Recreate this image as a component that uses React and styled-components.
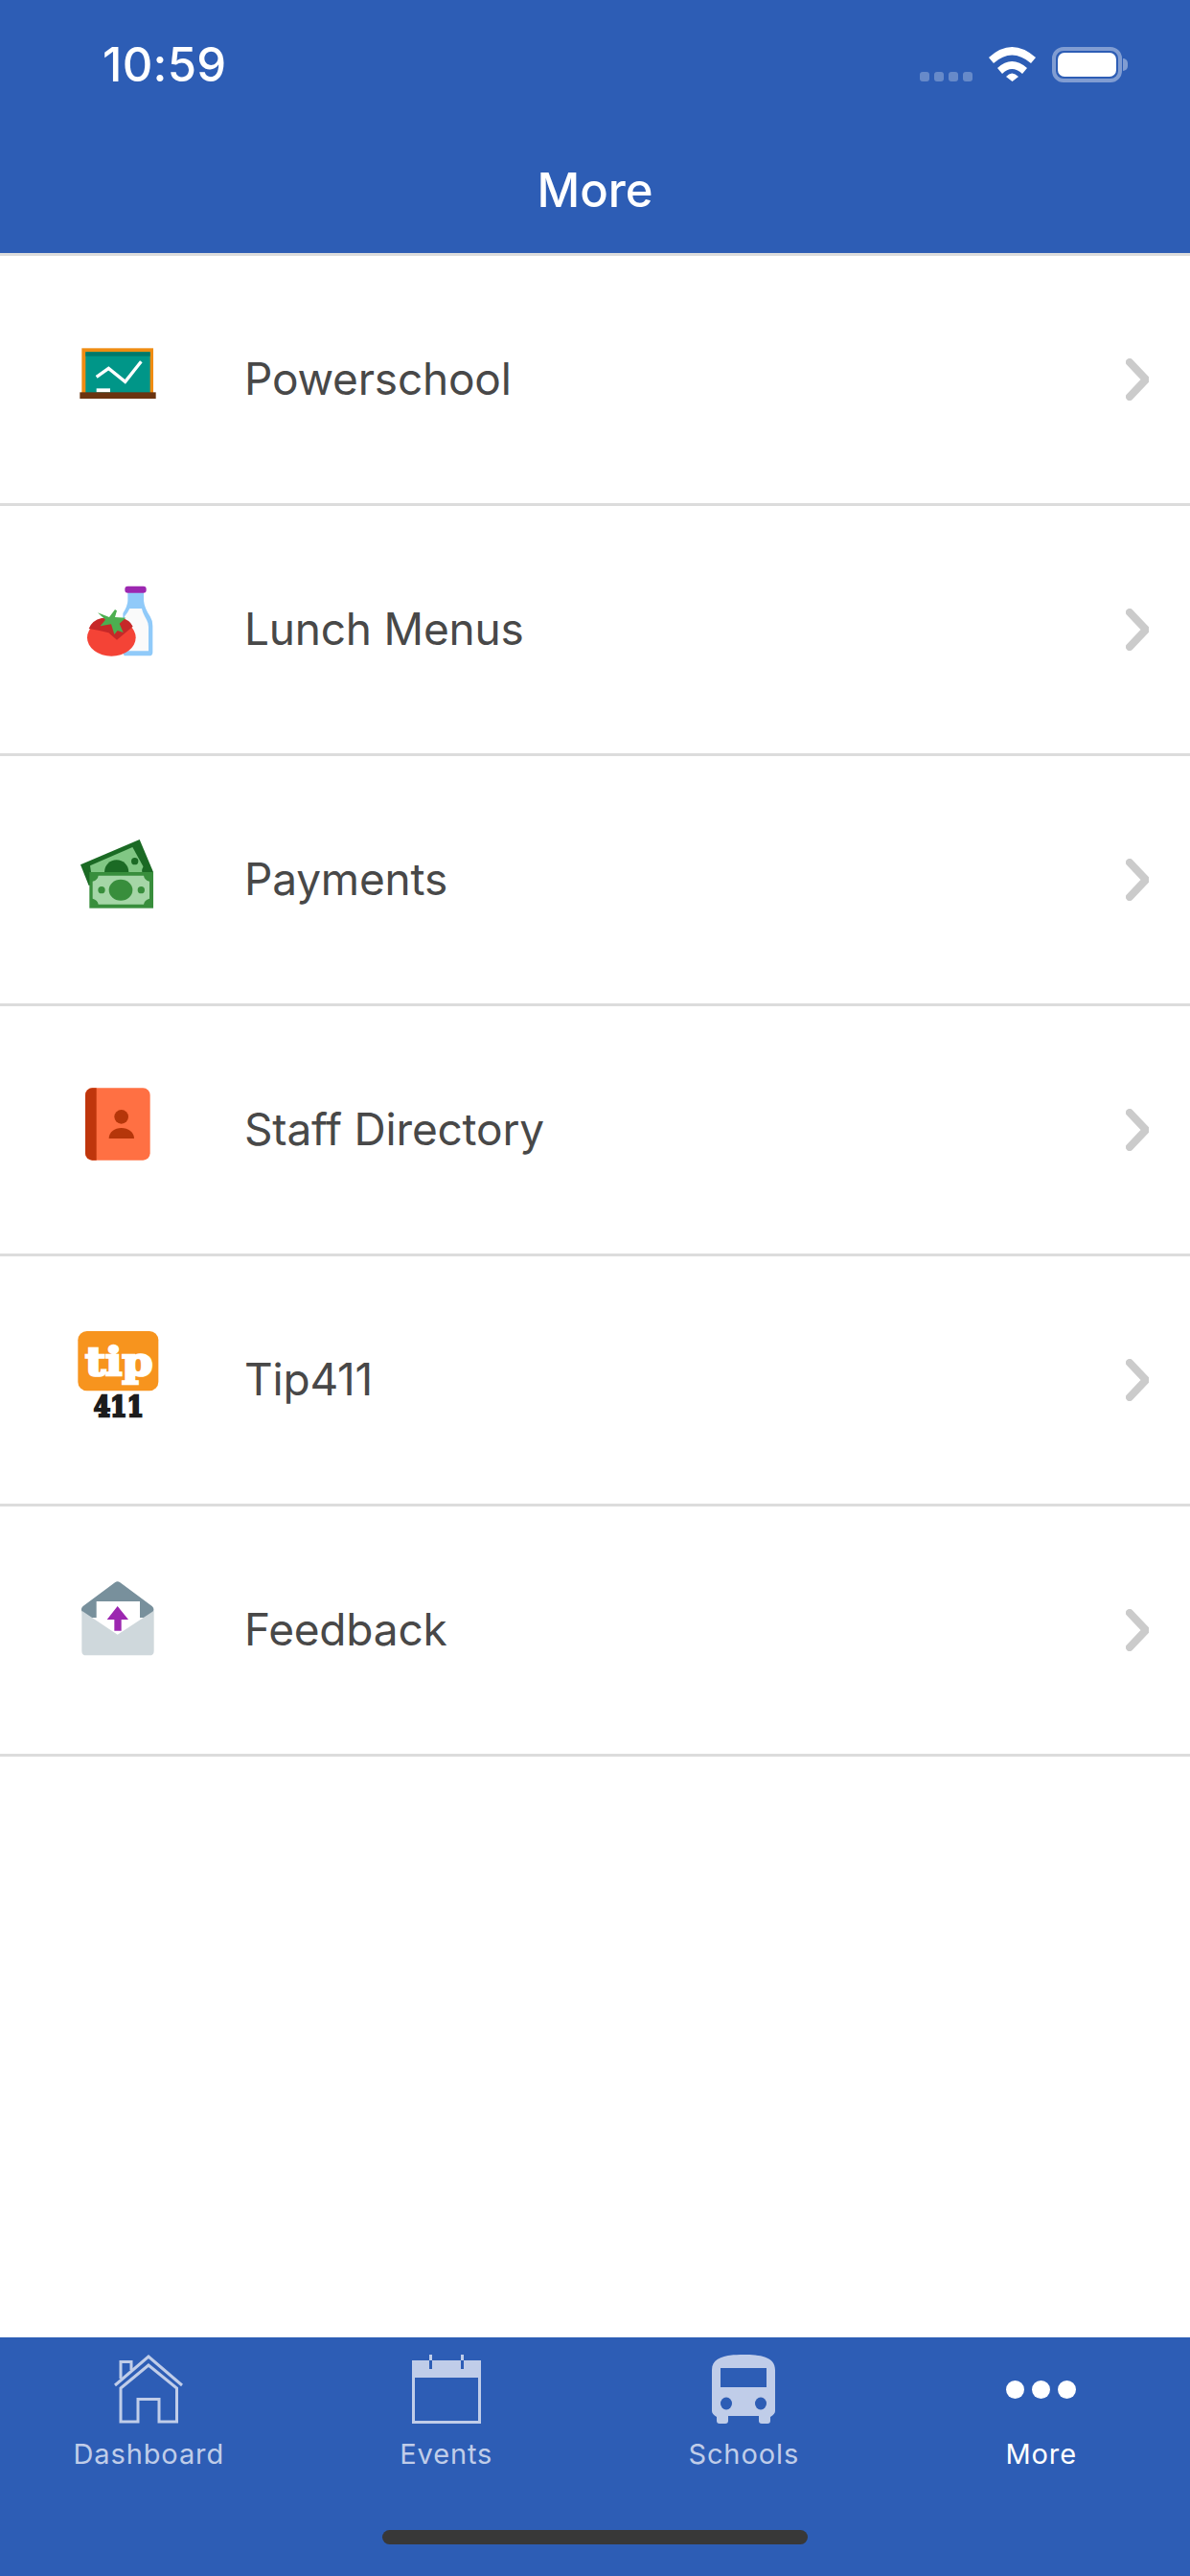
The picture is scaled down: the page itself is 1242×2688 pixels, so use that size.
import styled, { createGlobalStyle } from "styled-components"

const Global = createGlobalStyle`
    html, body {
        margin: 0;
        padding: 0;
        background: #fff;
    }
    body {
        font-family: "Inter", "Liberation Sans", sans-serif;
    }
`

const Page = styled.div`
    width: 1242px;
    height: 2688px;
    display: flex;
    flex-direction: column;
    overflow: hidden;
`

const Header = styled.header`
    height: 264px;
    flex: none;
    background: #2d5db5;
    border-bottom: 3px solid #dcdcdc;
    color: #fff;
    display: flex;
    flex-direction: column;
`

const StatusBar = styled.div`
    height: 132px;
    padding: 0 71px 0 107px;
    display: flex;
    justify-content: space-between;
    align-items: flex-start;
`

const Time = styled.span`
    margin-top: 41px;
    font-size: 49px;
    line-height: 54px;
    font-weight: 500;
    letter-spacing: 0.3px;
`

const StatusIcons = styled.div`
    margin-top: 49px;
    display: flex;
    align-items: flex-start;
`

const SignalDots = styled.div`
    margin: 26px 17px 0 0;
    display: flex;
    gap: 5px;
`

const SignalDot = styled.i`
    width: 10px;
    height: 10px;
    border-radius: 3px;
    background: rgba(255, 255, 255, 0.28);
`

const Battery = styled.div`
    position: relative;
    width: 73px;
    height: 37px;
    margin-left: 17px;
    box-sizing: border-box;
    padding: 2px;
    border: 4px solid rgba(255, 255, 255, 0.4);
    border-radius: 12px;

    &::after {
        content: "";
        position: absolute;
        right: -10px;
        top: 8px;
        width: 5px;
        height: 13px;
        border-radius: 0 6px 6px 0;
        background: rgba(255, 255, 255, 0.4);
    }
`

const BatteryFill = styled.div`
    height: 100%;
    background: #fff;
    border-radius: 7px;
`

const Title = styled.h1`
    margin: 0;
    text-align: center;
    font-size: 49px;
    line-height: 60px;
    font-weight: 500;
    margin-top: 37px;
`

const List = styled.main`
    flex: 1;
`

const Row = styled.div`
    height: 261px;
    box-sizing: border-box;
    border-bottom: 3px solid #dcdcdc;
    display: flex;
    align-items: center;
`

const IconBox = styled.div`
    width: 120px;
    height: 120px;
    margin: 0 65px 14px 70px;

    svg {
        display: block;
    }
`

const Label = styled.span`
    flex: 1;
    font-size: 46px;
    line-height: 60px;
    color: #484848;
    margin-bottom: 3px;
    letter-spacing: -0.2px;
`

const Chevron = styled.svg`
    margin-right: 43px;
    flex: none;
`

const TabBar = styled.nav`
    height: 249px;
    flex: none;
    background: #2d5db5;
    display: flex;
    flex-direction: column;
`

const Tabs = styled.div`
    display: grid;
    grid-template-columns: repeat(4, 1fr);
    padding-top: 18px;
`

const Tab = styled.div`
    display: flex;
    flex-direction: column;
    align-items: center;
    color: ${props => (props.$active ? "#fff" : "#c0cde9")};
`

const TabIcon = styled.div`
    height: 72px;
    display: flex;
    align-items: center;
    justify-content: center;
`

const TabLabel = styled.span`
    margin-top: 14px;
    font-size: 29px;
    line-height: 36px;
    letter-spacing: 0.9px;
`

const Dots = styled.div`
    display: flex;
    gap: 8px;
`

const Dot = styled.i`
    width: 19px;
    height: 19px;
    border-radius: 50%;
    background: #fff;
`

const HomeBar = styled.div`
    width: 444px;
    height: 15px;
    margin: 61px auto 0;
    border-radius: 8px;
    background: #383838;
`

const Icon = ({ y, x = 0, children }) => (
    <svg width="120" height="120" viewBox={`${x} ${y} 360 360`}>
        {children}
    </svg>
)

const BoardIcon = () => (
    <Icon x={30} y={-3}>
        <rect x="76" y="100" width="224" height="145" fill="#ef8c12" />
        <rect x="88" y="112" width="202" height="130" fill="#009688" />
        <rect x="88" y="112" width="202" height="13" fill="#00796b" />
        <polyline points="122,190 160,163 212,205 262,142" fill="none" stroke="#fff" strokeWidth="10" />
        <rect x="122" y="226" width="43" height="12" fill="#fff" />
        <rect x="70" y="238" width="238" height="20" fill="#6b3410" />
    </Icon>
)

const LunchIcon = () => (
    <Icon y={0}>
        <path d="M190 85h50v25q2 22 20 50q8 12 8 30v82q0 11-11 11H185q-10 0-10-11V150q15-25 15-40z" fill="#90caf9" />
        <path d="M196 135h38q3 15 15 35q6 10 6 22v76H180V160q10-12 16-25z" fill="#fafafa" />
        <rect x="181" y="65" width="67" height="21" rx="9" fill="#9c27b0" />
        <ellipse cx="139" cy="226" rx="76" ry="58" fill="#f44336" />
        <path d="M68 198q10-26 40-33h64q24 5 34 26l-50 42-26-22-32-8z" fill="#c62828" />
        <path d="M96 148l36 14 18-24 6 4-6 20 34 2-20 18 12 28-18-6-10 12-10-32-34 6 16-20z" fill="#4caf50" />
    </Icon>
)

const MoneyIcon = () => (
    <Icon y={-27}>
        <polygon points="42,127 227,48 270,150 68,192" fill="#1b6a24" />
        <polygon points="72,130 205,72 248,150 75,150" fill="#81c784" />
        <path d="M117 150a38 38 0 1 1 76 0z" fill="#1b6a24" />
        <circle cx="212" cy="116" r="11" fill="#1b6a24" />
        <path d="M235 150a18 18 0 0 1 22-22l10 22z" fill="#1b6a24" />
        <rect x="70" y="150" width="200" height="113" fill="#388e3c" />
        <path d="M98 161h142q2 14 18 18v54q-16 4-18 18H98q-2-14-18-18v-54q16-4 18-18z" fill="#a5d6a7" />
        <ellipse cx="168" cy="206" rx="37" ry="33" fill="#388e3c" />
        <circle cx="108" cy="206" r="11" fill="#388e3c" />
        <circle cx="232" cy="206" r="11" fill="#388e3c" />
    </Icon>
)

const BookIcon = () => (
    <Icon y={-24}>
        <rect x="57" y="46" width="203" height="226" rx="22" fill="#ff7043" />
        <path d="M92 46v226H79a22 22 0 0 1-22-22V68a22 22 0 0 1 22-22z" fill="#bf360c" />
        <circle cx="170" cy="136" r="22" fill="#b5360a" />
        <path d="M131 204c0-20 18-33 39-33s40 13 40 33z" fill="#b5360a" />
    </Icon>
)

const TipIcon = () => (
    <Icon y={9}>
        <rect x="34" y="57" width="252" height="187" rx="28" fill="#f7941e" />
        <text x="57" y="195" fontFamily="DejaVu Serif" fontWeight="700" fontSize="125" textLength="211" lengthAdjust="spacingAndGlyphs" fill="#fff" stroke="#fff" strokeWidth="8">tip</text>
        <text x="83" y="325" fontFamily="DejaVu Serif" fontWeight="700" fontSize="89" textLength="157" lengthAdjust="spacingAndGlyphs" fill="#1c1c1c" stroke="#1c1c1c" strokeWidth="7">411</text>
    </Icon>
)

const EnvelopeIcon = () => (
    <Icon y={-18}>
        <path d="M50 108L150 34q8-6 16 0l100 74q8 8 4 16l-8 20H55l-9-20q-4-8 4-16z" fill="#78909c" />
        <polygon points="92,93 228,93 228,175 158,205 92,175" fill="#fff" />
        <path d="M46 122l112 75 114-75v126q0 14-14 14H60q-14 0-14-14z" fill="#cfd8dc" />
        <polygon points="158,108 192,150 170,150 170,185 148,185 148,150 125,150" fill="#9c27b0" />
    </Icon>
)

const HomeTabIcon = () => (
    <svg width="72" height="72" viewBox="0 0 72 72" fill="none" stroke="currentColor" strokeWidth="3">
        <polyline points="1,32 36,2 71,32" />
        <path d="M7 35L36 11l29.500 24v35H47V46.500H25V70H7z" />
        <polyline points="7,25 7,7.500 18,7.500 18,16" />
    </svg>
)

const EventsTabIcon = () => (
    <svg width="72" height="72" viewBox="0 0 72 72">
        <rect x="1.500" y="7.500" width="69" height="63" fill="none" stroke="currentColor" strokeWidth="3" />
        <rect x="0" y="6" width="72" height="18" fill="currentColor" />
        <rect x="18" y="0" width="3" height="6" fill="currentColor" />
        <rect x="51" y="0" width="3" height="6" fill="currentColor" />
        <rect x="18" y="6" width="3" height="9" fill="#2d5db5" />
        <rect x="51" y="6" width="3" height="9" fill="#2d5db5" />
    </svg>
)

const BusTabIcon = () => (
    <svg width="66" height="72" viewBox="0 0 66 72">
        <path d="M33 0C50 0 66 2 66 16v43q0 3-5 6v4q0 3-3 3h-6q-3 0-3-3v-5H17v5q0 3-3 3H8q-3 0-3-3v-4q-5-3-5-6V16C0 2 16 0 33 0z" fill="currentColor" />
        <rect x="9" y="14" width="48" height="20" fill="#2d5db5" />
        <ellipse cx="15" cy="51" rx="6" ry="6.500" fill="#2d5db5" />
        <ellipse cx="51" cy="51" rx="6" ry="6.500" fill="#2d5db5" />
    </svg>
)

const items = [
    { label: "Powerschool", icon: <BoardIcon /> },
    { label: "Lunch Menus", icon: <LunchIcon /> },
    { label: "Payments", icon: <MoneyIcon /> },
    { label: "Staff Directory", icon: <BookIcon /> },
    { label: "Tip411", icon: <TipIcon /> },
    { label: "Feedback", icon: <EnvelopeIcon /> },
]

const tabs = [
    { label: "Dashboard", icon: <HomeTabIcon /> },
    { label: "Events", icon: <EventsTabIcon /> },
    { label: "Schools", icon: <BusTabIcon /> },
    {
        label: "More",
        active: true,
        icon: (
            <Dots>
                <Dot />
                <Dot />
                <Dot />
            </Dots>
        ),
    },
]

const App = () => {
    return (
        <Page>
            <Global />
            <Header>
                <StatusBar>
                    <Time>10:59</Time>
                    <StatusIcons>
                        <SignalDots>
                            <SignalDot />
                            <SignalDot />
                            <SignalDot />
                            <SignalDot />
                        </SignalDots>
                        <svg width="49" height="36" viewBox="0 0 49 36">
                            <path d="M0 11Q24-11 49 11l-5 6Q24 0 5 17z" fill="#fff" />
                            <path d="M9 22Q24 8 40 22l-5 6Q24 18 14 28z" fill="#fff" />
                            <path d="M18 31Q24 24 31 31l-6.500 5z" fill="#fff" />
                        </svg>
                        <Battery>
                            <BatteryFill />
                        </Battery>
                    </StatusIcons>
                </StatusBar>
                <Title>More</Title>
            </Header>
            <List>
                {items.map(item => (
                    <Row key={item.label}>
                        <IconBox>{item.icon}</IconBox>
                        <Label>{item.label}</Label>
                        <Chevron width="24" height="44" viewBox="0 0 24 44" fill="none" stroke="#cbcbcb" strokeWidth="8" strokeLinecap="round" strokeLinejoin="miter">
                            <polyline points="4,4 21,22 4,40" />
                        </Chevron>
                    </Row>
                ))}
            </List>
            <TabBar>
                <Tabs>
                    {tabs.map(tab => (
                        <Tab key={tab.label} $active={tab.active}>
                            <TabIcon>{tab.icon}</TabIcon>
                            <TabLabel>{tab.label}</TabLabel>
                        </Tab>
                    ))}
                </Tabs>
                <HomeBar />
            </TabBar>
        </Page>
    )
}

export default App
